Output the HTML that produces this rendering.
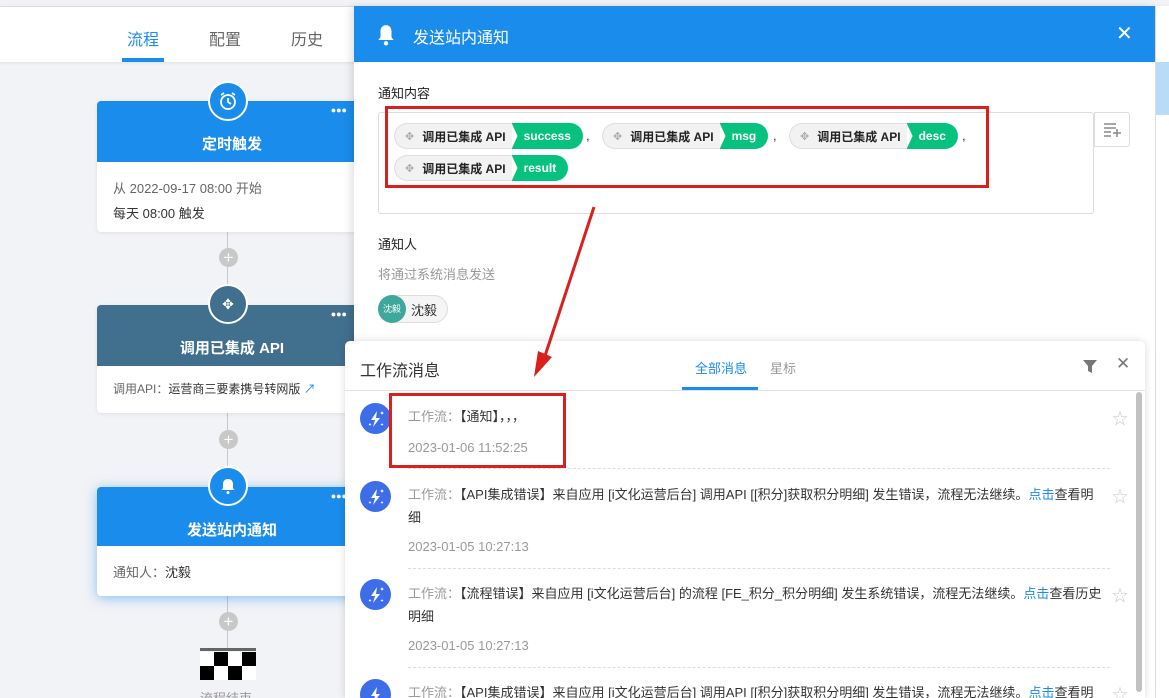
<!DOCTYPE html>
<html style="height:698px;overflow:hidden"><head><meta charset="utf-8"><style>
*{margin:0;padding:0;box-sizing:border-box}
body{width:1169px;height:698px;overflow:hidden;position:relative;background:#f2f3f7;font-family:"Liberation Sans","Noto Sans CJK SC",sans-serif;font-size:13px;color:#333}
.abs{position:absolute}
.nav{left:0;top:6px;width:1169px;height:56px;background:#fff;border-top:1px solid #ddd;box-shadow:0 1px 3px rgba(0,0,0,.08)}
.tab{position:absolute;top:19px;font-size:16px;color:#666}
.card{position:absolute;left:97px;width:270px;background:#fff;border-radius:4px;box-shadow:0 1px 4px rgba(0,0,0,.08);overflow:hidden}
.ch{height:61px;color:#fff;font-size:15px;font-weight:bold;text-align:center;padding-top:32px;position:relative}
.dots{position:absolute;right:20px;top:4px;font-size:9px;letter-spacing:0}
.circ{position:absolute;width:40px;height:40px;border-radius:50%;border:2px solid #fff;display:flex;align-items:center;justify-content:center}
.plus{position:absolute;left:219px;width:19px;height:19px;border-radius:50%;background:#c8c8c8;color:#fff;text-align:center;line-height:19px;font-size:17px}
.vline{position:absolute;left:227px;width:1px;background:#c8c8c8}
.panel{left:354px;top:6px;width:801px;height:692px;background:#fff;box-shadow:-3px 0 8px rgba(0,0,0,.12)}
.ph{height:56px;background:#1a8cec;color:#fff;font-size:16px;position:relative}
.chip{position:absolute;height:26px;display:flex;align-items:center;font-size:12px;font-weight:bold;border-radius:13px}
.chip .l{background:#f2f2f2;border:1px solid #ddd;border-right:none;height:26px;border-radius:13px 0 0 13px;padding:0 6px 0 10px;display:flex;align-items:center;color:#222}
.chip .r{background:#07c27e;color:#fff;height:26px;border-radius:0 13px 13px 0;padding:0 12px 0 12px;display:flex;align-items:center;clip-path:polygon(0 0,100% 0,100% 100%,0 100%,6px 50%)}
.mv{color:#aaa;font-weight:normal;margin-right:8px;font-size:11px}
.pop{left:345px;top:341px;width:800px;height:357px;background:#fff;border-radius:5px 5px 0 0;box-shadow:0 0 8px rgba(0,0,0,.15);overflow:hidden}
.ic{position:absolute;left:15px;width:31px;height:31px;border-radius:50%;background:#3d6ee8;display:flex;align-items:center;justify-content:center}
.mt{position:absolute;left:63px;width:697px;line-height:23px;color:#333}
.mt .g{color:#999}
.mt a{color:#1a8cec}
.dt{position:absolute;left:63px;color:#999}
.star{position:absolute;left:767px;color:#ccc;font-size:16px}
.sep{position:absolute;left:63px;width:702px;border-top:1px dashed #ddd}
</style></head><body>
<div class="abs nav">
 <div class="tab" style="left:127px;color:#1a8cec">流程</div>
 <div class="tab" style="left:209px">配置</div>
 <div class="tab" style="left:291px">历史</div>
 <div class="abs" style="left:122px;top:51px;width:42px;height:4px;background:#1a8cec"></div>
</div>

<div class="vline" style="top:232px;height:73px"></div>
<div class="vline" style="top:413px;height:74px"></div>
<div class="vline" style="top:596px;height:52px"></div>

<div class="card" style="top:101px;height:131px">
 <div class="ch" style="background:#1a8cec">定时触发<span class="dots">●●●</span></div>
 <div style="padding:14px 16px;color:#666;line-height:25px">从 2022-09-17 08:00 开始<br><span style="color:#333">每天 08:00 触发</span></div>
</div>
<div class="circ" style="left:208px;top:81px;background:#1a8cec"><svg width="20" height="20" viewBox="0 0 20 20" fill="none" stroke="#fff" stroke-width="1.8"><circle cx="10" cy="11" r="7"/><path d="M10 7v4l3 2M3 4l3-2M17 4l-3-2"/></svg></div>
<div class="plus" style="top:248px">+</div>

<div class="card" style="top:305px;height:108px">
 <div class="ch" style="background:#41708f">调用已集成 API<span class="dots">●●●</span></div>
 <div style="padding:14px 16px;color:#666;font-size:12px">调用API：<span style="color:#333">运营商三要素携号转网版</span> <span style="color:#1a8cec">↗</span></div>
</div>
<div class="circ" style="left:208px;top:284px;background:#41708f;color:#fff;font-size:14px">✥</div>
<div class="plus" style="top:430px">+</div>

<div class="card" style="top:487px;height:109px;box-shadow:0 2px 12px rgba(26,140,236,.5)">
 <div class="ch" style="background:#1a8cec;height:59px">发送站内通知<span class="dots">●●●</span></div>
 <div style="padding:16px 16px;color:#666">通知人：<span style="color:#333">沈毅</span></div>
</div>
<div class="circ" style="left:208px;top:466px;background:#1a8cec"><svg width="18" height="18" viewBox="0 0 18 18"><path d="M9 2c-3 0-5 2-5 5v4l-1.5 2h13L14 11V7c0-3-2-5-5-5z" fill="#fff"/><circle cx="9" cy="15.5" r="1.5" fill="#fff"/></svg></div>
<div class="plus" style="top:612px">+</div>
<div class="abs" style="left:200px;top:648px;width:56px;height:3px;background:#666"></div>
<div class="abs" style="left:200px;top:652px;width:56px;height:28px;background:conic-gradient(#000 25%,#fff 0 50%,#000 0 75%,#fff 0) 0 0/28px 28px"></div>
<div class="abs" style="left:200px;top:688px;color:#999;font-size:13px">流程结束</div>

<div class="abs panel">
 <div class="ph"><svg class="abs" style="left:22px;top:18px" width="20" height="22" viewBox="0 0 18 20"><path d="M9 1c-3 0-5 2.5-5 5.5V12l-2 2.5h14L14 12V6.5C14 3.5 12 1 9 1z" fill="#fff"/><circle cx="9" cy="17.5" r="2" fill="#fff"/></svg>
 <span class="abs" style="left:59px;top:18px">发送站内通知</span><span class="abs" style="left:762px;top:15px;font-size:20px">✕</span></div>
 <div class="abs" style="left:24px;top:77px;font-size:13px;color:#222">通知内容</div>
 <div class="abs" style="left:24px;top:106px;width:716px;height:102px;border:1px solid #ddd;border-radius:3px"></div>
 <div class="abs" style="left:740px;top:106px;width:36px;height:35px;border:1px solid #ddd;border-radius:0 3px 3px 0"><svg class="abs" style="left:9px;top:10px" width="17" height="14" viewBox="0 0 17 14" stroke="#888" stroke-width="1.5"><path d="M0 1h12M0 5h12M0 9h7M0 13h7M9 10h8M13 6v8"/></svg></div>
 <div class="chip" style="left:40px;top:117px"><span class="l"><span class="mv">✥</span>调用已集成 API</span><span class="r">success</span></div>
 <span class="abs" style="left:232px;top:122px">,</span>
 <div class="chip" style="left:248px;top:117px"><span class="l"><span class="mv">✥</span>调用已集成 API</span><span class="r">msg</span></div>
 <span class="abs" style="left:419px;top:122px">,</span>
 <div class="chip" style="left:435px;top:117px"><span class="l"><span class="mv">✥</span>调用已集成 API</span><span class="r">desc</span></div>
 <span class="abs" style="left:608px;top:122px">,</span>
 <div class="chip" style="left:40px;top:149px"><span class="l"><span class="mv">✥</span>调用已集成 API</span><span class="r">result</span></div>
 <div class="abs" style="left:31px;top:100px;width:604px;height:82px;border:3px solid #d9201c"></div>
 <div class="abs" style="left:24px;top:228px;color:#222">通知人</div>
 <div class="abs" style="left:24px;top:258px;color:#999">将通过系统消息发送</div>
 <div class="abs" style="left:24px;top:289px;width:70px;height:28px;border:1px solid #ddd;border-radius:14px;background:#f5f5f5"></div>
 <div class="abs" style="left:24px;top:289px;width:28px;height:28px;border-radius:50%;background:#3ea89c;color:#fff;font-size:9px;text-align:center;line-height:28px">沈毅</div>
 <div class="abs" style="left:57px;top:294px;color:#333">沈毅</div>
</div>
<div class="abs" style="left:1155px;top:6px;width:14px;height:692px;background:#fff;border-left:1px solid #ddd"></div>
<div class="abs" style="left:1156px;top:62px;width:13px;height:53px;background:#b8dbf8"></div>

<div class="abs pop">
 <div class="abs" style="left:15px;top:16px;font-size:16px;color:#333">工作流消息</div>
 <div class="abs" style="left:350px;top:17px;color:#1a8cec">全部消息</div>
 <div class="abs" style="left:337px;top:46px;width:76px;height:3px;background:#1a8cec"></div>
 <div class="abs" style="left:425px;top:17px;color:#999">星标</div>
 <svg class="abs" style="left:738px;top:19px" width="14" height="13"><path d="M0 0h14l-5 6v7l-4-2V6z" fill="#777"/></svg>
 <div class="abs" style="left:771px;top:13px;color:#777;font-size:17px">✕</div>
 <div class="abs" style="left:0;top:49px;width:800px;border-top:1px solid #e3e3e3"></div>
 <div class="abs" style="left:791px;top:51px;width:6px;height:300px;border-radius:3px;background:#c1c1c1"></div>

 <div class="ic" style="top:62px"><svg width="20" height="20" viewBox="0 0 20 20" fill="#fff"><path d="M11 2L5 11h4l-2 7 7-9h-4z"/><path d="M16 2l.6 1.4L18 4l-1.4.6L16 6l-.6-1.4L14 4l1.4-.6zM4 14l.5 1 1 .5-1 .5L4 17l-.5-1-1-.5 1-.5zM16 14l.5 1 1 .5-1 .5-.5 1-.5-1-1-.5 1-.5z"/></svg></div>
 <div class="mt" style="top:64px"><span class="g">工作流：</span>【通知】，，，</div>
 <div class="dt" style="top:99px">2023-01-06 11:52:25</div>
 <div class="star" style="top:64px">☆</div>
 <div class="abs" style="left:44px;top:52px;width:177px;height:75px;border:3px solid #d9201c"></div>
 <div class="sep" style="top:127px"></div>

 <div class="ic" style="top:140px"><svg width="20" height="20" viewBox="0 0 20 20" fill="#fff"><path d="M11 2L5 11h4l-2 7 7-9h-4z"/><path d="M16 2l.6 1.4L18 4l-1.4.6L16 6l-.6-1.4L14 4l1.4-.6zM4 14l.5 1 1 .5-1 .5L4 17l-.5-1-1-.5 1-.5zM16 14l.5 1 1 .5-1 .5-.5 1-.5-1-1-.5 1-.5z"/></svg></div>
 <div class="mt" style="top:142px"><span class="g">工作流：</span>【API集成错误】来自应用 [i文化运营后台] 调用API [[积分]获取积分明细] 发生错误，流程无法继续。<a>点击</a>查看明细</div>
 <div class="dt" style="top:198px">2023-01-05 10:27:13</div>
 <div class="star" style="top:142px">☆</div>
 <div class="sep" style="top:227px"></div>

 <div class="ic" style="top:238px"><svg width="20" height="20" viewBox="0 0 20 20" fill="#fff"><path d="M11 2L5 11h4l-2 7 7-9h-4z"/><path d="M16 2l.6 1.4L18 4l-1.4.6L16 6l-.6-1.4L14 4l1.4-.6zM4 14l.5 1 1 .5-1 .5L4 17l-.5-1-1-.5 1-.5zM16 14l.5 1 1 .5-1 .5-.5 1-.5-1-1-.5 1-.5z"/></svg></div>
 <div class="mt" style="top:241px"><span class="g">工作流：</span>【流程错误】来自应用 [i文化运营后台] 的流程 [FE_积分_积分明细] 发生系统错误，流程无法继续。<a>点击</a>查看历史明细</div>
 <div class="dt" style="top:297px">2023-01-05 10:27:13</div>
 <div class="star" style="top:241px">☆</div>
 <div class="sep" style="top:326px"></div>

 <div class="ic" style="top:338px"><svg width="20" height="20" viewBox="0 0 20 20" fill="#fff"><path d="M11 2L5 11h4l-2 7 7-9h-4z"/></svg></div>
 <div class="mt" style="top:340px"><span class="g">工作流：</span>【API集成错误】来自应用 [i文化运营后台] 调用API [[积分]获取积分明细] 发生错误，流程无法继续。<a>点击</a>查看明细</div>
 <div class="star" style="top:340px">☆</div>
</div>

<svg class="abs" style="left:530px;top:205px;z-index:5" width="70" height="180"><path d="M64 2L12 160" stroke="#d9201c" stroke-width="3"/><path d="M4 172l4-26 14 6z" fill="#d9201c"/></svg>
</body></html>
